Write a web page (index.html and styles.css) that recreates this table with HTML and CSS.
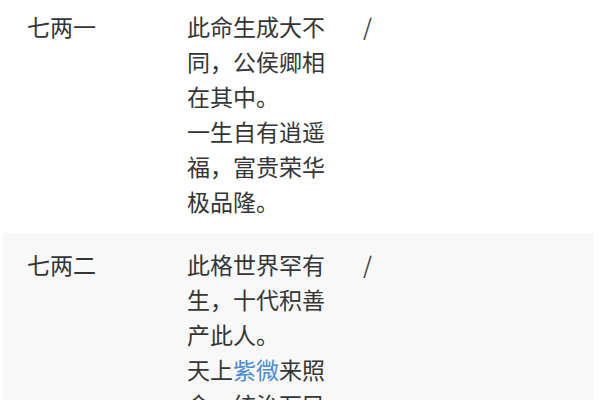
FILE: index.html
```html
<!DOCTYPE html>
<html lang="zh">
<head>
<meta charset="utf-8">
<link rel="stylesheet" href="styles.css">
</head>
<body>
<div class="table">
  <div class="row">
    <div class="weight">七两一</div>
    <div class="verse">此命生成大不同，公侯卿相在其中。<br>一生自有逍遥福，富贵荣华极品隆。</div>
    <div class="note">/</div>
  </div>
  <div class="row alt">
    <div class="weight">七两二</div>
    <div class="verse">此格世界罕有生，十代积善产此人。<br>天上<a class="link" href="#">紫微</a>来照命，统治万民乐太平。</div>
    <div class="note">/</div>
  </div>
</div>
</body>
</html>
```
FILE: styles.css
```css
html, body {
  margin: 0;
  padding: 0;
  background: #ffffff;
  overflow: hidden;
}
body {
  font-family: "Noto Sans CJK SC", "Noto Sans", sans-serif;
  font-size: 23px;
  line-height: 35px;
  color: #353535;
}
.table {
  margin: -5px 7px 0 3px;
}
.row {
  display: grid;
  grid-template-columns: 134px 150px 1fr;
  column-gap: 26px;
  padding: 14px 0 14px 24px;
  background: #ffffff;
}
.row.alt {
  background: #f8f8f8;
}
.verse {
  word-break: break-all;
}
.note {
  color: #444;
}
.link {
  color: #4a8bd3;
  text-decoration: none;
}
```
